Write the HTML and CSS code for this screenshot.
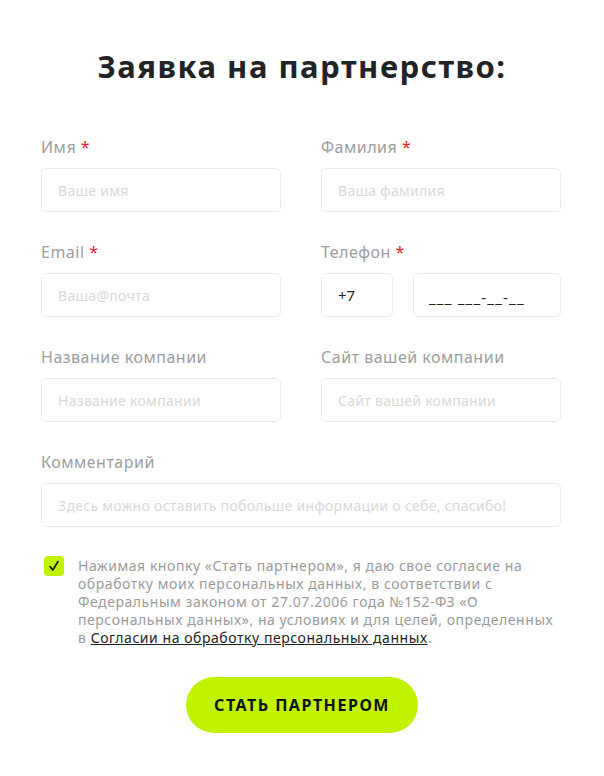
FILE: index.html
```html
<!DOCTYPE html>
<html lang="ru">
<head>
<meta charset="utf-8">
<link rel="stylesheet" href="styles.css">
</head>
<body>
<main class="page">
  <h1 class="title">Заявка на партнерство:</h1>
  <form class="form">
    <div class="grid">
      <div class="field">
        <label class="label">Имя <span class="req">*</span></label>
        <div class="input placeholder">Ваше имя</div>
      </div>
      <div class="field">
        <label class="label">Фамилия <span class="req">*</span></label>
        <div class="input placeholder">Ваша фамилия</div>
      </div>
      <div class="field">
        <label class="label">Email <span class="req">*</span></label>
        <div class="input placeholder">Ваша@почта</div>
      </div>
      <div class="field">
        <label class="label">Телефон <span class="req">*</span></label>
        <div class="phone">
          <div class="input code">+7</div>
          <div class="input mask">___ ___-__-__</div>
        </div>
      </div>
      <div class="field">
        <label class="label">Название компании</label>
        <div class="input placeholder">Название компании</div>
      </div>
      <div class="field">
        <label class="label">Сайт вашей компании</label>
        <div class="input placeholder">Сайт вашей компании</div>
      </div>
      <div class="field wide">
        <label class="label">Комментарий</label>
        <div class="input placeholder">Здесь можно оставить побольше информации о себе, спасибо!</div>
      </div>
    </div>
    <div class="consent">
      <span class="check">
        <svg width="12" height="12" viewBox="0 0 12 12"><path d="M2 6.5 L4.8 10 L10 1.5" fill="none" stroke="#111" stroke-width="1.6" stroke-linecap="round" stroke-linejoin="round"/></svg>
      </span>
      <p class="consent-text">Нажимая кнопку «Стать партнером», я даю свое согласие на<br>обработку моих персональных данных, в соответствии с<br>Федеральным законом от 27.07.2006 года №152-ФЗ «О<br>персональных данных», на условиях и для целей, определенных<br>в <a class="link">Согласии на обработку персональных данных</a>.</p>
    </div>
    <div class="actions">
      <button type="button" class="btn">СТАТЬ ПАРТНЕРОМ</button>
    </div>
  </form>
</main>
</body>
</html>
```
FILE: styles.css
```css
* { box-sizing: border-box; }
body {
  margin: 0;
  background: #fff;
  font-family: "Noto Sans", "Open Sans", sans-serif;
  color: #222;
}
.page {
  width: 520px;
  margin-left: 41px;
  padding-top: 44px;
}
.title {
  margin: 0 0 0 -41px;
  width: 604px;
  text-align: center;
  font-size: 31px;
  font-weight: 700;
  line-height: 44px;
  color: #222325;
  letter-spacing: 1.5px;
}
.form { margin-top: 49px; }
.grid {
  display: grid;
  grid-template-columns: 240px 240px;
  column-gap: 40px;
  row-gap: 30px;
}
.field { display: flex; flex-direction: column; }
.wide { grid-column: 1 / 3; }
.label {
  font-size: 16px;
  line-height: 20px;
  color: #9d9d9d;
  margin-bottom: 11px;
  letter-spacing: 0.5px;
}
.req { color: #e5202a; }
.input {
  height: 44px;
  border: 1px solid #ebebeb;
  border-radius: 5px;
  padding: 0 16px;
  display: flex;
  align-items: center;
  font-size: 14px;
}
.placeholder { color: #d8d8d8; letter-spacing: 0.3px; }
.phone { display: flex; gap: 20px; }
.code { width: 72px; color: #222; font-size: 15px; }
.mask { flex: 1; color: #222; font-size: 15px; padding-left: 15px; padding-top: 4px; letter-spacing: 1.2px; }
.consent {
  display: flex;
  gap: 14px;
  margin-top: 30px;
  padding-left: 3px;
}
.check {
  flex: none;
  width: 20px;
  height: 20px;
  margin-top: -1px;
  border-radius: 4px;
  background: #bff200;
  display: flex;
  align-items: center;
  justify-content: center;
}
.consent-text {
  margin: 0;
  font-size: 14px;
  line-height: 18px;
  color: #9a9a9a;
  letter-spacing: 0.55px;
  white-space: nowrap;
}
.link { color: #222; text-decoration: underline; }
.actions {
  display: flex;
  justify-content: center;
  margin-top: 30px;
  margin-left: -41px;
  width: 604px;
}
.btn {
  width: 232px;
  height: 56px;
  border: 0;
  border-radius: 28px;
  background: #c1f200;
  font-family: inherit;
  font-size: 16px;
  font-weight: 700;
  color: #111;
  letter-spacing: 1.5px;
}
```
